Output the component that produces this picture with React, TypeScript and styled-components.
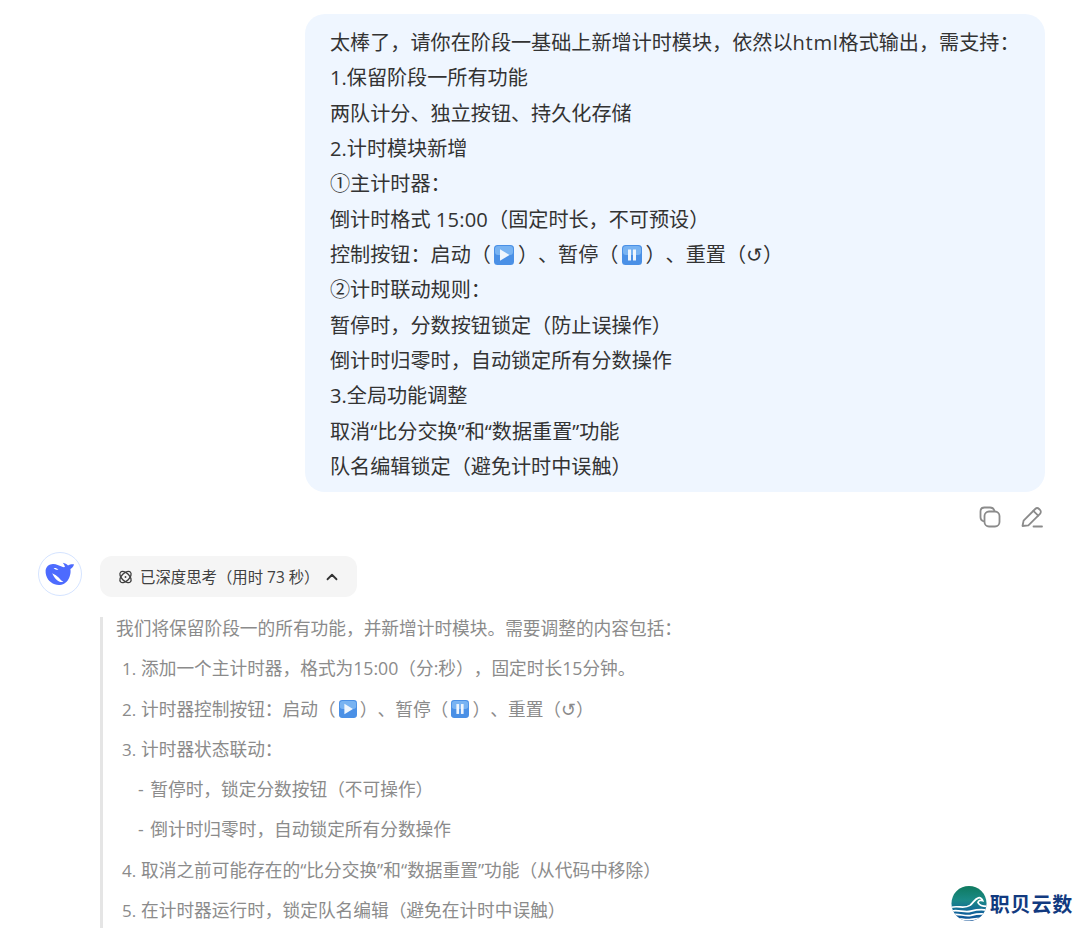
import React from "react";
import styled, { createGlobalStyle } from "styled-components";
import { ChevronUp } from "lucide-react";

const GlobalStyle = createGlobalStyle`
	html, body {
		margin: 0;
		padding: 0;
		height: 928px;
		overflow: hidden;
		background: #fff;
	}
	body {
		font-family: "Open Sans", "Noto Sans CJK SC", sans-serif;
		text-spacing-trim: space-all;
	}
`;

const Page = styled.div`
	position: relative;
	width: 1080px;
	height: 928px;
	overflow: hidden;
	padding-top: 14px;
	box-sizing: border-box;
`;

const UserRow = styled.div`
	display: flex;
	justify-content: flex-end;
	padding-right: 35px;
`;

const Bubble = styled.div`
	width: 740px;
	height: 478px;
	box-sizing: border-box;
	padding: 11px 25px 0;
	background: #eff6ff;
	border-radius: 20px;
	color: #333;
	font-size: 20.13px;
	line-height: 35.33px;
`;

const Line = styled.div`
	height: 35.33px;
	white-space: nowrap;
`;

const Latin = styled.span<{ $spacing: number }>`
	letter-spacing: ${(p) => p.$spacing}px;
`;

const Actions = styled.div`
	display: flex;
	justify-content: flex-end;
	gap: 18px;
	padding: 13px 36px 0 0;
	height: 26px;
	color: #8b8b8b;
`;

const AnswerRow = styled.div`
	display: flex;
	gap: 18px;
	padding: 21px 0 0 38px;
`;

const Avatar = styled.div`
	width: 44px;
	height: 44px;
	box-sizing: border-box;
	flex: none;
	display: flex;
	align-items: center;
	justify-content: center;
	border: 1px solid #d5e4ff;
	border-radius: 50%;
	background: #fff;
`;

const Body = styled.div`
	flex: 1;
	min-width: 0;
	padding-top: 4px;
`;

const ThinkChip = styled.div`
	display: inline-flex;
	align-items: center;
	height: 41px;
	box-sizing: border-box;
	padding: 0 16px 0 18px;
	border-radius: 12px;
	background: #f5f5f5;
	color: #404040;
	font-size: 15.4px;
`;

const ChipLabel = styled.span`
	margin: 0 3px 0 7px;
	white-space: nowrap;
`;

const Thinking = styled.div`
	display: flex;
	flex-direction: column;
	gap: 18.3px;
	margin-top: 20px;
	border-left: 3px solid #e5e5e5;
	padding: 0 0 20px 13px;
	color: #8b8b8b;
	font-size: 17.7px;
	line-height: 22px;
`;

const ThinkLine = styled.div<{ $indent?: number }>`
	height: 22px;
	white-space: nowrap;
	padding-left: ${(p) => p.$indent ?? 0}px;
`;

const SubLine = styled(ThinkLine)`
	padding-left: 22px;
	word-spacing: 2px;
`;

const ListNo = styled.span`
	display: inline-block;
	width: 19px;
	font-size: 17px;
`;

const Watermark = styled.div`
	position: absolute;
	right: 7px;
	bottom: 6px;
	display: flex;
	align-items: center;
	gap: 3px;
	padding-left: 6px;
	background: rgba(255, 255, 255, 0.85);
	color: #123a80;
	font-size: 20px;
	font-weight: 700;
	letter-spacing: 0.8px;
`;

const EmojiBox = styled.svg<{ $size: number }>`
	display: inline-block;
	width: ${(p) => p.$size}px;
	height: ${(p) => p.$size}px;
	vertical-align: -0.14em;
	margin: 0 ${(p) => p.$size * 0.175}px;
`;

function PlayEmoji({ size }: { size: number }) {
	return (
		<EmojiBox $size={size} viewBox="0 0 20 20">
			<rect x="0" y="0" width="20" height="20" rx="3.5" fill="#4a90e6" />
			<rect x="1" y="1" width="18" height="9" rx="3" fill="#78b3f2" />
			<path d="M6 4.2 L15.5 10 L6 15.8 Z" fill="#eef5fd" />
		</EmojiBox>
	);
}

function PauseEmoji({ size }: { size: number }) {
	return (
		<EmojiBox $size={size} viewBox="0 0 20 20">
			<rect x="0" y="0" width="20" height="20" rx="3.5" fill="#4a90e6" />
			<rect x="1" y="1" width="18" height="9" rx="3" fill="#78b3f2" />
			<rect x="6" y="4.5" width="3" height="11" fill="#eef5fd" />
			<rect x="11" y="4.5" width="3" height="11" fill="#eef5fd" />
		</EmojiBox>
	);
}

function CopyIcon() {
	return (
		<svg width="24" height="24" viewBox="0 0 24 24" fill="none" stroke="currentColor" strokeWidth="1.8">
			<path d="M6 16.5 C3.6 15.8 2.5 14.6 2.5 12 V6.5 C2.5 3.8 3.8 2.5 6.5 2.5 H12 C14.6 2.5 15.8 3.6 16.5 6" />
			<rect x="6.5" y="6.5" width="15" height="15" rx="4.5" />
		</svg>
	);
}

function EditIcon() {
	return (
		<svg width="24" height="24" viewBox="0 0 24 24" fill="none" stroke="currentColor" strokeWidth="1.8" strokeLinejoin="round" strokeLinecap="round">
			<path d="M2.5 21 L3.6 15.6 L15.2 4 C16.3 2.9 18 2.9 19.1 4 L20 4.9 C21.1 6 21.1 7.7 20 8.8 L8.4 20.4 Z" />
			<path d="M13.4 5.8 L18.2 10.6" />
			<path d="M13.5 21.5 H22" />
		</svg>
	);
}

function WhaleLogo() {
	return (
		<svg width="30" height="24" viewBox="0 0 30 24">
			<path
				fill="#4d6bfe"
				d="M0.6 8.5 C1 4.6 4.4 1.8 8.4 2 C11.5 2.1 14 3.6 16.6 4.6 C17.8 5.1 19 5.3 20 5 C19.6 3.6 18.9 2.2 17.8 0.8 C20 1.2 21.8 2.2 23 3.6 C24.4 2.8 26.4 2.2 29 2.4 C28.4 4.4 27 6 25.4 7 C25.8 9.4 25.6 12.4 24.4 15.2 C22.8 19.4 19.4 22.6 14.8 23 C8.6 23.4 3 19.6 1.2 13.6 C0.7 11.9 0.5 10.2 0.6 8.5 Z"
			/>
			<path d="M8.6 6 C10.4 5.6 12.2 6.2 13.4 7.6 C11.6 8.2 9.8 7.6 8.6 6 Z" fill="#fff" />
			<path d="M7.2 11.2 C9.6 12.6 11.6 13.4 13.6 15.4 C15.2 17 16.4 18.8 18.4 19.8 C14.6 21 10 18 7.2 11.2 Z" fill="#fff" />
		</svg>
	);
}

function AtomIcon() {
	return (
		<svg width="15" height="16" viewBox="0 0 16 16" fill="none" stroke="#404040" strokeWidth="1.4">
			<ellipse cx="8" cy="8" rx="7.4" ry="4.1" transform="rotate(45 8 8)" />
			<ellipse cx="8" cy="8" rx="7.4" ry="4.1" transform="rotate(-45 8 8)" />
			<circle cx="8" cy="8" r="1" fill="#404040" stroke="none" />
		</svg>
	);
}

function WaveLogo() {
	return (
		<svg width="36" height="37" viewBox="0 0 38 38">
			<defs>
				<linearGradient id="globe" x1="0" y1="0" x2="0" y2="1">
					<stop offset="0" stopColor="#0f7a5f" />
					<stop offset="0.4" stopColor="#1a8a86" />
					<stop offset="0.75" stopColor="#12659a" />
					<stop offset="1" stopColor="#0f4f96" />
				</linearGradient>
				<clipPath id="disc">
					<circle cx="19" cy="19" r="18.5" />
				</clipPath>
			</defs>
			<circle cx="19" cy="19" r="18.5" fill="url(#globe)" />
			<g clipPath="url(#disc)" fill="none" stroke="#fff" strokeWidth="1.8">
				<path d="M0 23 C8 21 14 25 20 21 C24 18 25 14 29 13 C31 12.5 33 14 33.5 16 C31 15 29 16 28.5 18 C30 21 34 22 38 22" />
				<path d="M0 27 C8 25 14 29 21 27 C27 25.5 32 25 38 26" />
				<path d="M0 31 C8 29 14 33 21 31.5 C27 30 32 29.5 38 30.5" />
				<path d="M2 35.5 C8 33.5 14 37 21 35.8 C27 34.8 32 34 38 35" />
			</g>
		</svg>
	);
}

const userLines = [
	"1.保留阶段一所有功能",
	"两队计分、独立按钮、持久化存储",
	"2.计时模块新增",
	"①主计时器：",
];

const userTail = [
	"②计时联动规则：",
	"暂停时，分数按钮锁定（防止误操作）",
	"倒计时归零时，自动锁定所有分数操作",
	"3.全局功能调整",
	"取消“比分交换”和“数据重置”功能",
	"队名编辑锁定（避免计时中误触）",
];

export default function App() {
	return (
		<Page>
			<GlobalStyle />
			<UserRow>
				<Bubble>
					<Line>
						太棒了，请你在阶段一基础上新增计时模块，依然以<Latin $spacing={0.7}>html</Latin>格式输出，需支持：
					</Line>
					{userLines.map((text) => (
						<Line key={text}>{text}</Line>
					))}
					<Line>
						倒计时格式 <Latin $spacing={0.2}>15:00</Latin>（固定时长，不可预设）
					</Line>
					<Line>
						控制按钮：启动（<PlayEmoji size={20} />）、暂停（<PauseEmoji size={20} />）、重置（↺）
					</Line>
					{userTail.map((text) => (
						<Line key={text}>{text}</Line>
					))}
				</Bubble>
			</UserRow>
			<Actions>
				<CopyIcon />
				<EditIcon />
			</Actions>
			<AnswerRow>
				<Avatar>
					<WhaleLogo />
				</Avatar>
				<Body>
					<ThinkChip>
						<AtomIcon />
						<ChipLabel>已深度思考（用时 73 秒）</ChipLabel>
						<ChevronUp size={18} strokeWidth={2.4} color="#333" />
					</ThinkChip>
					<Thinking>
						<ThinkLine>我们将保留阶段一的所有功能，并新增计时模块。需要调整的内容包括：</ThinkLine>
						<ThinkLine $indent={6}>
							<ListNo>1.</ListNo>添加一个主计时器，格式为15:00（分:秒），固定时长15分钟。
						</ThinkLine>
						<ThinkLine $indent={6}>
							<ListNo>2.</ListNo>计时器控制按钮：启动（<PlayEmoji size={18} />）、暂停（<PauseEmoji size={18} />）、重置（↺）
						</ThinkLine>
						<ThinkLine $indent={6}>
							<ListNo>3.</ListNo>计时器状态联动：
						</ThinkLine>
						<SubLine>- 暂停时，锁定分数按钮（不可操作）</SubLine>
						<SubLine>- 倒计时归零时，自动锁定所有分数操作</SubLine>
						<ThinkLine $indent={6}>
							<ListNo>4.</ListNo>取消之前可能存在的“比分交换”和“数据重置”功能（从代码中移除）
						</ThinkLine>
						<ThinkLine $indent={6}>
							<ListNo>5.</ListNo>在计时器运行时，锁定队名编辑（避免在计时中误触）
						</ThinkLine>
					</Thinking>
				</Body>
			</AnswerRow>
			<Watermark>
				<WaveLogo />
				<span>职贝云数</span>
			</Watermark>
		</Page>
	);
}
